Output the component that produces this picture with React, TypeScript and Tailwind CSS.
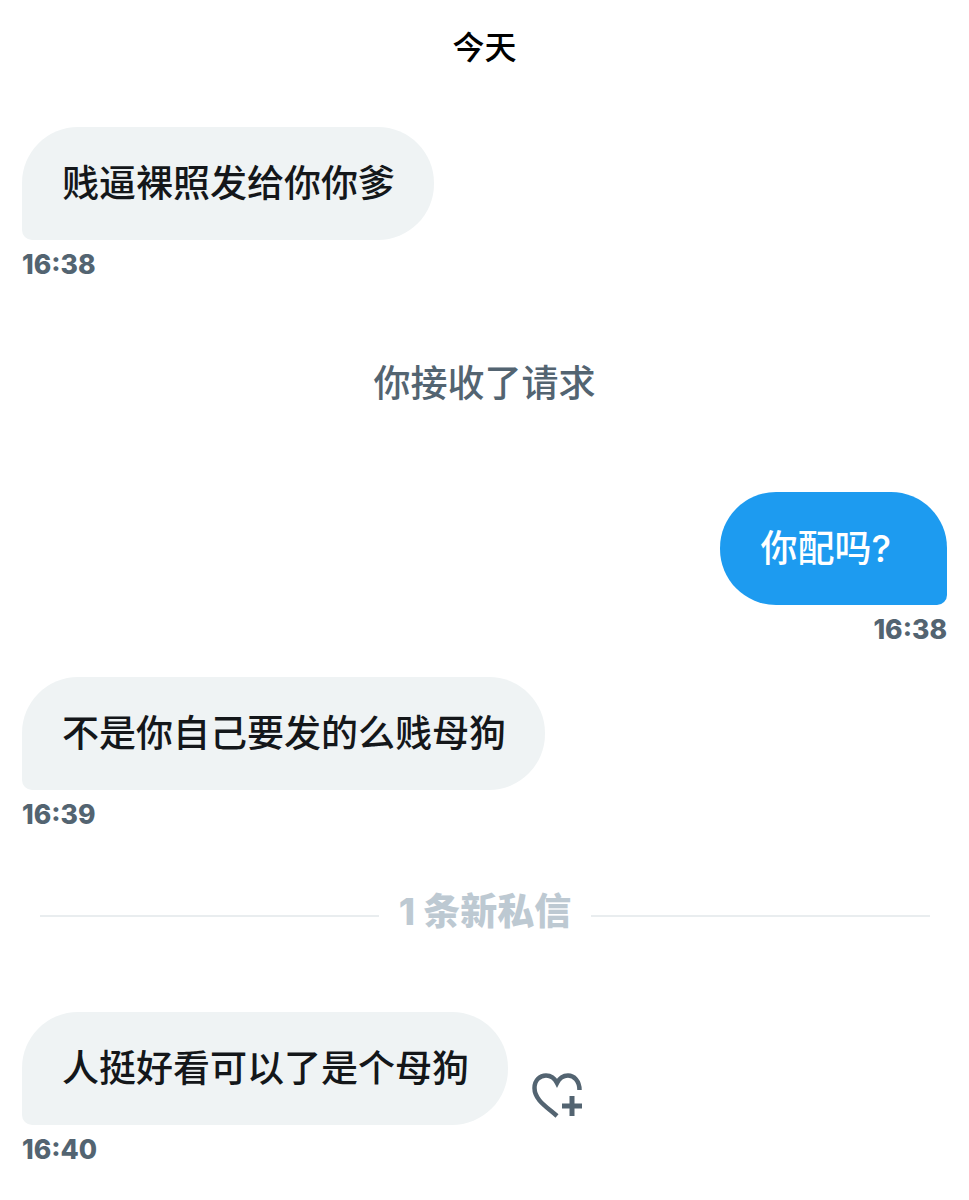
const cjk = "font-['Inter','Noto_Sans_CJK_SC',sans-serif]";

function Bubble({ text }: { text: string }) {
  return (
    <div className="flex h-[113px] w-fit items-center rounded-[56px] rounded-bl-[10px] bg-[#eff3f4] pr-[39px] pl-10 text-[37px] font-medium whitespace-nowrap text-[#14171a]">
      {text}
    </div>
  );
}

function Time({ value, right }: { value: string; right?: boolean }) {
  return (
    <div className={`mt-[8px] h-[33px] text-[26.5px] leading-[33px] font-extrabold text-[#536471] ${right ? 'text-right' : ''}`}>
      {value}
    </div>
  );
}

function HeartPlus() {
  return (
    <svg viewBox="0 0 52 46" className="mb-[6px] ml-6 h-[46px] w-[52px] flex-shrink-0" fill="none" stroke="#536471" strokeWidth="4.5">
      <path d="M25 43C15 34 2.5 27 2.5 15C2.5 7 8 2.5 14 2.5C19 2.5 23 6 25 10C27 6 31 2.5 36 2.5C42 2.5 47.5 8 47.5 17" />
      <path d="M30 33H50M40 23V43" strokeWidth="5" />
    </svg>
  );
}

export default function App() {
  return (
    <div className={`${cjk} h-[1200px] w-[969px] overflow-hidden bg-white px-[22px]`}>
      {/* 日期 */}
      <div className="flex h-[127px] justify-center pt-[24px] text-[32px] leading-[48px] font-medium text-black">今天</div>

      <Bubble text="贱逼裸照发给你你爹" />
      <Time value="16:38" />

      {/* 系统提示 */}
      <div className="mt-[75px] h-[56px] text-center text-[37px] leading-[56px] font-medium text-[#536471]">你接收了请求</div>

      <div className="mt-[80px] flex flex-col items-end">
        <div className="flex h-[113px] items-center rounded-[56px] rounded-br-[10px] bg-[#1d9bf0] pr-[56px] pl-10 text-[37px] font-medium text-white">
          你配吗?
        </div>
      </div>
      <Time value="16:38" right />

      <div className="mt-[31px]">
        <Bubble text="不是你自己要发的么贱母狗" />
        <Time value="16:39" />
      </div>

      {/* 新私信分割线 */}
      <div className="mt-[57px] flex h-[56px] items-center pr-[17px] pl-[18px]">
        <div className="h-[2px] flex-1 bg-[#e9edef]" />
        <span className="mx-[20px] mb-[8px] text-[37px] leading-[56px] font-extrabold text-[#bdc9d2]">1 条新私信</span>
        <div className="h-[2px] flex-1 bg-[#e9edef]" />
      </div>

      <div className="mt-[68px] flex items-end">
        <Bubble text="人挺好看可以了是个母狗" />
        <HeartPlus />
      </div>
      <Time value="16:40" />
    </div>
  );
}
